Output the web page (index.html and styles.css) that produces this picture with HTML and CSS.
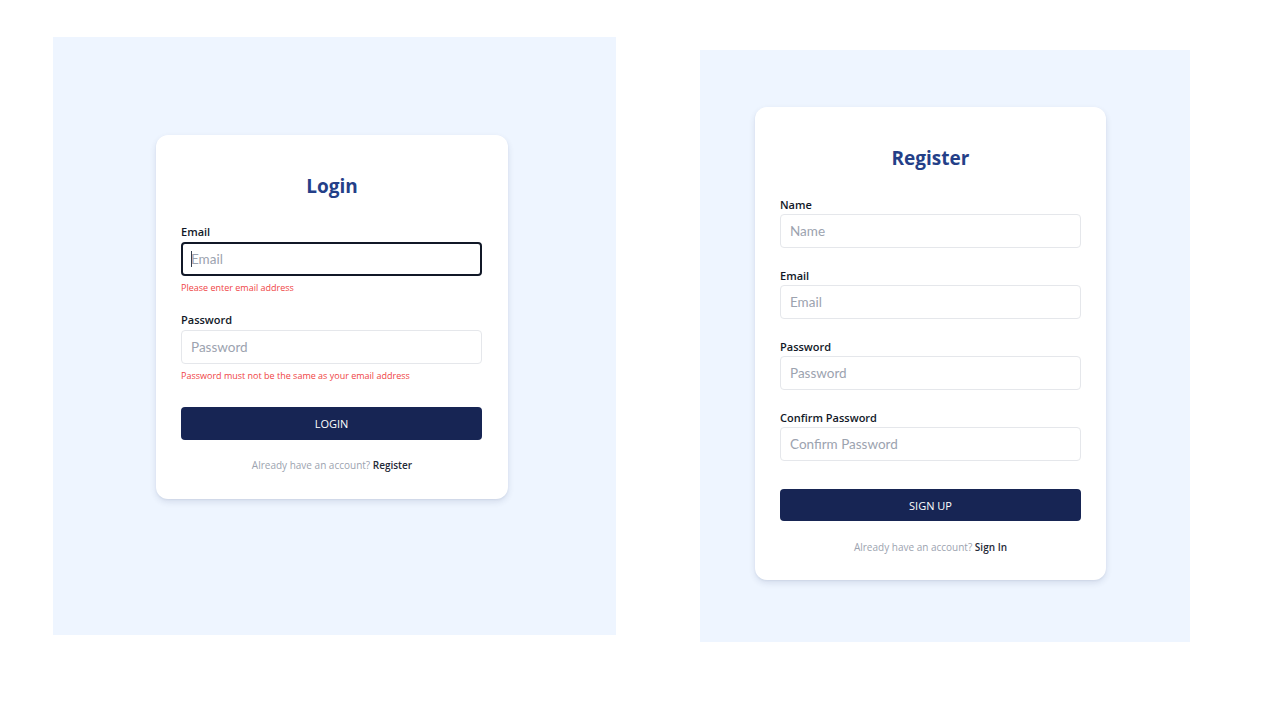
FILE: index.html
```html
<!DOCTYPE html>
<html lang="en">
<head>
<meta charset="utf-8">
<title>Login / Register</title>
<link rel="stylesheet" href="styles.css">
</head>
<body>
<main class="stage">
  <section class="panel panel-login">
    <div class="card card-login">
      <h1 class="title">Login</h1>
      <div class="field field-first">
        <label class="label">Email</label>
        <div class="input-wrap">
          <input class="input input-focused" type="text" placeholder="Email">
          <span class="caret"></span>
        </div>
        <p class="error">Please enter email address</p>
      </div>
      <div class="field field-last">
        <label class="label">Password</label>
        <input class="input" type="password" placeholder="Password">
        <p class="error">Password must not be the same as your email address</p>
      </div>
      <button class="btn">LOGIN</button>
      <p class="foot">Already have an account? <a class="link">Register</a></p>
    </div>
  </section>
  <section class="panel panel-register">
    <div class="card card-register">
      <h1 class="title">Register</h1>
      <div class="field field-reg">
        <label class="label">Name</label>
        <input class="input" type="text" placeholder="Name">
      </div>
      <div class="field field-reg">
        <label class="label">Email</label>
        <input class="input" type="text" placeholder="Email">
      </div>
      <div class="field field-reg">
        <label class="label">Password</label>
        <input class="input" type="password" placeholder="Password">
      </div>
      <div class="field field-reg">
        <label class="label">Confirm Password</label>
        <input class="input" type="password" placeholder="Confirm Password">
      </div>
      <button class="btn btn-reg">SIGN UP</button>
      <p class="foot">Already have an account? <a class="link">Sign In</a></p>
    </div>
  </section>
</main>
</body>
</html>
```

FILE: styles.css
```css
* { box-sizing: border-box; }
html, body { margin: 0; padding: 0; background: #ffffff; }
body {
  font-family: "Open Sans", "Noto Sans", "Liberation Sans", sans-serif;
  width: 1280px;
  height: 720px;
  overflow: hidden;
}
.stage {
  display: flex;
  align-items: flex-start;
  gap: 84px;
  padding-left: 53px;
}
.panel {
  background: #eef5ff;
}
.panel-login {
  width: 563px;
  height: 598px;
  margin-top: 37px;
  padding: 98px 0 0 103px;
}
.panel-register {
  width: 490px;
  height: 592px;
  margin-top: 50px;
  padding: 57px 0 0 55px;
}
.card {
  background: #ffffff;
  border-radius: 12px;
  box-shadow: 0 3px 6px rgba(30, 50, 100, 0.12), 0 1px 2px rgba(30, 50, 100, 0.06);
  padding: 37px 25px 0;
}
.card-login { width: 352px; height: 364px; }
.card-register { width: 351px; height: 473px; }
.title {
  margin: 0 0 25px;
  text-align: center;
  font-size: 19px;
  font-weight: 700;
  color: #243f88;
  line-height: 28px;
}
.card-register .title { margin-bottom: 26px; }
.field { display: flex; flex-direction: column; }
.label {
  font-size: 11px;
  font-weight: 600;
  color: #111827;
  line-height: 14px;
  margin-bottom: 3px;
}
.field-reg .label { margin-bottom: 2px; }
.input-wrap { position: relative; }
.input {
  width: 301px;
  height: 34px;
  border: 1px solid #e5e7eb;
  border-radius: 4px;
  padding: 0 9px;
  font-family: "Lato", "Open Sans", sans-serif;
  font-size: 13.5px;
  color: #111827;
  background: #fff;
  outline: none;
}
.input::placeholder { color: #9ca3af; }
.input-focused {
  border: 2px solid #111827;
  padding: 0 8px;
}
.caret {
  position: absolute;
  left: 10px;
  top: 9px;
  width: 1px;
  height: 16px;
  background: #374151;
}
.error {
  margin: 6px 0 0;
  font-size: 9px;
  line-height: 12px;
  color: #ef4444;
}
.field-first { margin-bottom: 19px; }
.field-last { margin-bottom: 25px; }
.field-reg { margin-bottom: 21px; }
.btn {
  display: block;
  width: 301px;
  height: 33px;
  border: 0;
  border-radius: 4px;
  background: #172554;
  color: #ffffff;
  font-family: inherit;
  font-size: 11px;
  font-weight: 500;
  letter-spacing: 0;
}
.btn-reg { margin-top: 28px; height: 32px; }
.foot {
  margin: 18px 0 0;
  text-align: center;
  font-size: 10px;
  color: #9ca3af;
  line-height: 14px;
}
.card-register .foot { margin-top: 19px; }
.link {
  color: #1f2937;
  font-weight: 600;
}
```
